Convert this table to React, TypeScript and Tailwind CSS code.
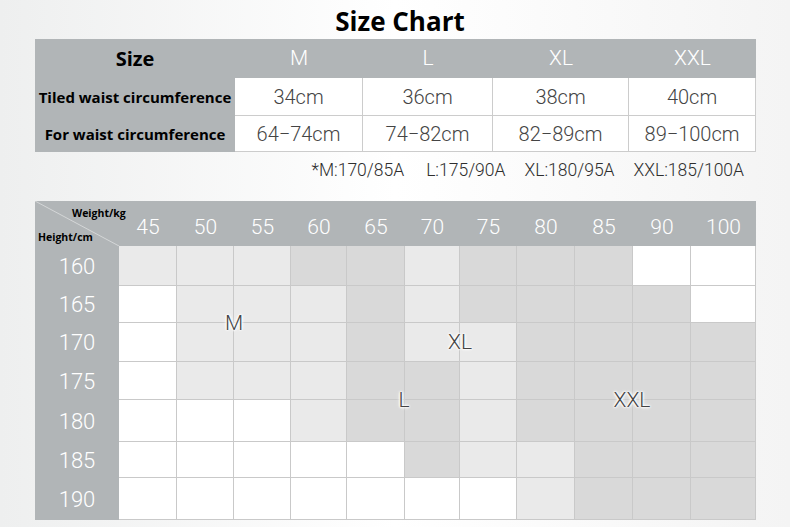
import React from 'react';

const sizes = [
  { name: 'M', tiled: '34cm', waist: '64−74cm' },
  { name: 'L', tiled: '36cm', waist: '74−82cm' },
  { name: 'XL', tiled: '38cm', waist: '82−89cm' },
  { name: 'XXL', tiled: '40cm', waist: '89−100cm' },
];

const weights = ['45', '50', '55', '60', '65', '70', '75', '80', '85', '90', '100'];

// W = white, L = light grey, D = darker grey
const rows = [
  { h: '160', height: 'h-[40px]', cells: 'LLLDDLDDDWW' },
  { h: '165', height: 'h-[37px]', cells: 'WLLLDLDDDDW' },
  { h: '170', height: 'h-[39px]', cells: 'WLLLDLLDDDD' },
  { h: '175', height: 'h-[38px]', cells: 'WLLLDDLDDDD' },
  { h: '180', height: 'h-[42px]', cells: 'WWWLDDLDDDD' },
  { h: '185', height: 'h-[36px]', cells: 'WWWWWDLLDDD' },
  { h: '190', height: 'h-[42px]', cells: 'WWWWWWWLDDD' },
];

const cellBg = (c: string) =>
  c === 'D' ? 'bg-[#d9d9d9]' : c === 'L' ? 'bg-[#eaeaea]' : 'bg-white';

const labels = [
  { text: 'M', pos: 'left-[199px] top-[122px]' },
  { text: 'XL', pos: 'left-[425px] top-[141px]' },
  { text: 'L', pos: 'left-[369px] top-[199px]' },
  { text: 'XXL', pos: 'left-[597px] top-[199px]' },
];

const cols = 'grid-cols-[84px_58px_57px_57px_56px_58px_55px_57px_58px_58px_58px_65px]';
const topCols = 'grid-cols-[200px_128px_130px_136px_127px]';

export default function App() {
  return (
    <div className="w-[790px] h-[527px] overflow-hidden bg-linear-to-r from-[#eeefef] via-white to-[#f4f4f4] font-['Roboto',sans-serif]">
      {/* Title */}
      <div className="h-[39px] pt-[3px] pl-[10px] text-center font-['Open_Sans',sans-serif] text-[26px] font-bold leading-[37px] text-black">
        Size Chart
      </div>

      {/* Size table */}
      <div className={`mx-[35px] grid ${topCols} w-[721px]`}>
        <div className="flex h-[39px] items-center justify-center bg-[#b1b5b7] font-['Open_Sans',sans-serif] text-[20px] font-bold text-black">
          Size
        </div>
        {sizes.map((s) => (
          <div key={s.name} className="flex h-[39px] items-center justify-center bg-[#b1b5b7] text-[21px] font-light text-white">
            {s.name}
          </div>
        ))}

        <div className="flex h-[38px] items-center justify-center bg-[#b1b5b7] font-['Open_Sans',sans-serif] text-[15px] font-bold text-black">
          Tiled waist circumference
        </div>
        {sizes.map((s) => (
          <div key={s.name} className="flex h-[38px] items-center justify-center border-r border-b border-[#cccccc] bg-white text-[20px] font-light text-[#444]">
            {s.tiled}
          </div>
        ))}

        <div className="flex h-[36px] items-center justify-center bg-[#b1b5b7] font-['Open_Sans',sans-serif] text-[15px] font-bold text-black">
          For waist circumference
        </div>
        {sizes.map((s) => (
          <div key={s.name} className="flex h-[36px] items-center justify-center border-r border-b border-[#cccccc] bg-white text-[20px] font-light text-[#444]">
            {s.waist}
          </div>
        ))}
      </div>

      {/* Footnote */}
      <div className="flex h-[49px] items-center justify-end gap-[19px] pr-[46px] pb-[13px] text-[17.5px] font-light text-[#2e2e2e]">
        <span>*M:170/85A</span>
        <span className="ml-[3px]">L:175/90A</span>
        <span>XL:180/95A</span>
        <span>XXL:185/100A</span>
      </div>

      {/* Weight / height chart */}
      <div className={`relative mx-[35px] grid ${cols} w-[721px]`}>
        <div className="relative h-[45px] bg-[#b1b5b7]">
          <svg className="absolute inset-0" width="84" height="45" viewBox="0 0 84 45">
            <line x1="0" y1="0" x2="84" y2="45" stroke="#d4d6d7" strokeWidth="1" />
          </svg>
          <span className="absolute left-[37px] top-[5px] whitespace-nowrap font-['Open_Sans',sans-serif] text-[10.5px] font-bold text-black">
            Weight/kg
          </span>
          <span className="absolute left-[3px] top-[29px] whitespace-nowrap font-['Open_Sans',sans-serif] text-[10.5px] font-bold text-black">
            Height/cm
          </span>
        </div>
        {weights.map((w) => (
          <div key={w} className="flex h-[45px] items-center justify-center bg-[#b1b5b7] pt-[9px] text-[21px] font-light text-white">
            {w}
          </div>
        ))}

        {rows.map((r) => (
          <React.Fragment key={r.h}>
            <div className={`flex ${r.height} items-center justify-center bg-[#b1b5b7] text-[22px] font-light text-white`}>
              {r.h}
            </div>
            {r.cells.split('').map((c, i) => (
              <div key={i} className={`${r.height} border-r border-b border-[#c9c9c9] ${cellBg(c)}`} />
            ))}
          </React.Fragment>
        ))}

        {labels.map((l) => (
          <span
            key={l.text}
            className={`absolute ${l.pos} -translate-x-1/2 -translate-y-1/2 text-[21px] font-light leading-none text-[#444] [text-shadow:0_0_2px_#fff,0_0_2px_#fff,0_0_3px_#fff,0_0_3px_#fff,0_0_4px_#fff]`}
          >
            {l.text}
          </span>
        ))}
      </div>
    </div>
  );
}
